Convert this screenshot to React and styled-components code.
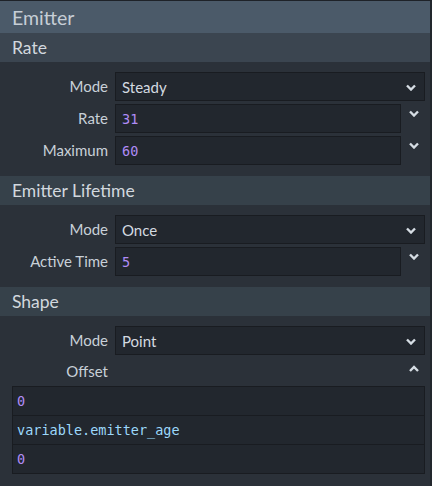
import styled, { createGlobalStyle } from 'styled-components';

const Global = createGlobalStyle`
  html, body { margin:0; padding:0; background:#2b3139; }
  body { font-family: Lato, "Open Sans", sans-serif; }
`;

const Panel = styled.div`
  width:430px;
  height:485px;
  border-top:1px solid #1e2228;
  border-right:2px solid #22272d;
  background:#2b3139;
  overflow:hidden;
`;

const Title = styled.div`
  height:32px;
  background:#4b5a69;
  color:#c6ced6;
  font-size:19.5px;
  line-height:33px;
  padding-left:12px;
`;

const SectionHead = styled.div`
  height:29px;
  background:${p => p.first ? '#3b4550' : '#36414a'};
  color:#d2d8de;
  font-size:17.5px;
  line-height:29px;
  padding-left:12px;
`;

const Body = styled.div`
  display:flex;
  flex-direction:column;
  gap:3px;
  padding:10px 5px ${p => p.last ? 0 : 11}px 0;
`;

const Row = styled.div`
  display:grid;
  grid-template-columns:108px 1fr ${p => p.spin ? '17px' : '0px'};
  column-gap:7px;
  align-items:center;
  height:${p => p.h || 29}px;
`;

const Label = styled.div`
  text-align:right;
  color:#c8d0d8;
  font-size:15px;
  padding-bottom:2px;
`;

const Field = styled.div`
  grid-column:${p => p.spin ? 'auto' : '2 / 4'};
  height:29px;
  box-sizing:border-box;
  border:1px solid #191c21;
  background:#22272e;
  display:flex;
  align-items:center;
  justify-content:space-between;
  padding:1px 8px 0 6px;
  color:#d4dae0;
  font-size:15px;
`;

const Num = styled.span`
  font-family:"DejaVu Sans Mono", "Liberation Mono", monospace;
  font-size:13.5px;
  color:${p => p.blue ? '#9cd8fb' : '#b08cf6'};
`;

const Spin = styled.div`
  align-self:start;
  display:flex;
  justify-content:center;
  padding-top:${p => p.pt || 6}px;
  margin-left:-7px;
  width:26px;
`;

const Vectors = styled.div`
  margin:1px 5px 0 12px;
  display:flex;
  flex-direction:column;
  gap:1px;
  background:#191c21;
  border:1px solid #191c21;
`;

const VecItem = styled.div`
  height:28px;
  background:#22272e;
  display:flex;
  align-items:center;
  padding-left:4px;
`;

function Chevron({ up }) {
  return (
    <svg width="10" height="7" viewBox="0 0 10 7">
      <path
        d={up ? 'M1 6 L5 2 L9 6' : 'M1 1.5 L5 5.5 L9 1.5'}
        fill="none"
        stroke="#d6dde4"
        strokeWidth="2.4"
        strokeLinejoin="miter"
      />
    </svg>
  );
}

function SelectRow({ label, value }) {
  return (
    <Row>
      <Label>{label}</Label>
      <Field>
        <span>{value}</span>
        <Chevron />
      </Field>
    </Row>
  );
}

function NumberRow({ label, value }) {
  return (
    <Row spin>
      <Label>{label}</Label>
      <Field spin>
        <Num>{value}</Num>
      </Field>
      <Spin><Chevron /></Spin>
    </Row>
  );
}

export default function App() {
  return (
    <>
      <Global />
      <Panel>
        <Title>Emitter</Title>
        <SectionHead first>Rate</SectionHead>
        <Body>
          <SelectRow label="Mode" value="Steady" />
          <NumberRow label="Rate" value="31" />
          <NumberRow label="Maximum" value="60" />
        </Body>
        <SectionHead>Emitter Lifetime</SectionHead>
        <Body>
          <SelectRow label="Mode" value="Once" />
          <NumberRow label="Active Time" value="5" />
        </Body>
        <SectionHead>Shape</SectionHead>
        <Body last>
          <SelectRow label="Mode" value="Point" />
          <Row spin h={27}>
            <Label>Offset</Label>
            <div />
            <Spin pt={7}><Chevron up /></Spin>
          </Row>
        </Body>
        <Vectors>
          <VecItem><Num>0</Num></VecItem>
          <VecItem><Num blue>variable.emitter_age</Num></VecItem>
          <VecItem><Num>0</Num></VecItem>
        </Vectors>
      </Panel>
    </>
  );
}
